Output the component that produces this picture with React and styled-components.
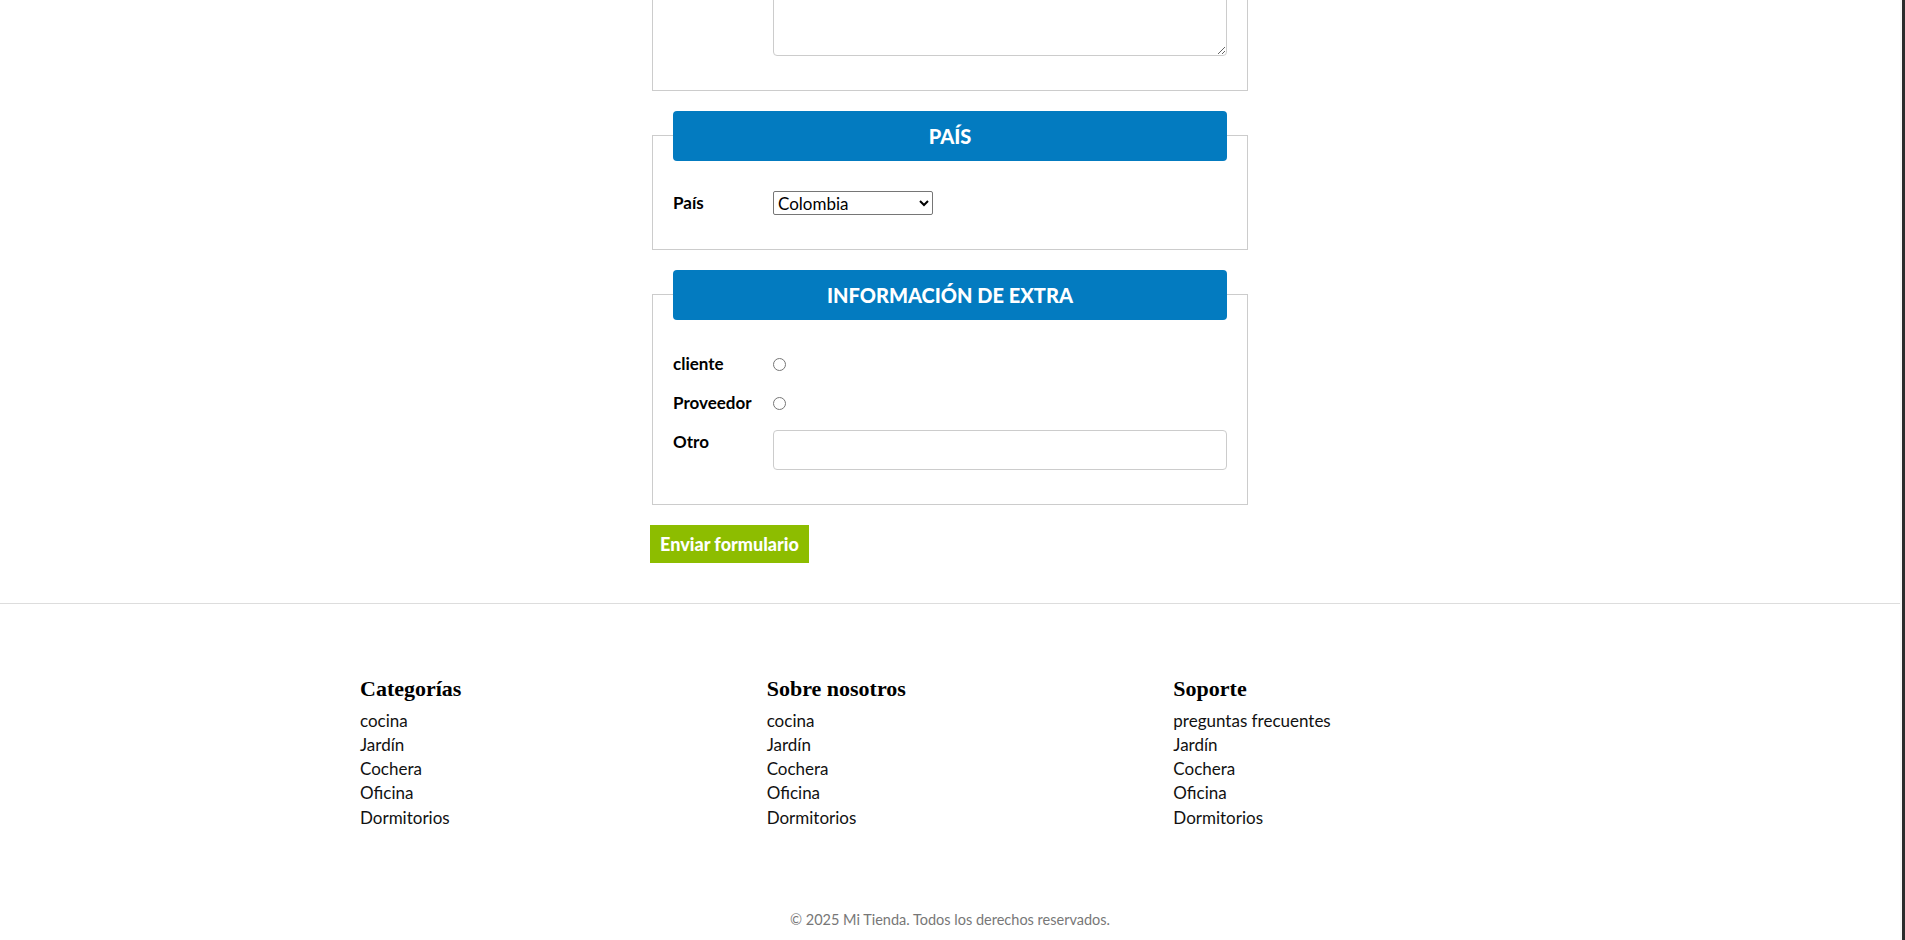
import React from "react";
import styled, { createGlobalStyle } from "styled-components";

const GlobalStyle = createGlobalStyle`
  * { box-sizing: border-box; }
  html, body { margin: 0; padding: 0; background: #ffffff; }
  body {
    font-family: Lato, "Open Sans", "Liberation Sans", sans-serif;
    color: #111;
    overflow: hidden;
  }
`;

const Shell = styled.div`
  display: flex;
  width: 1905px;
  height: 940px;
`;

const Page = styled.div`
  flex: 1;
  height: 940px;
  overflow: hidden;
  display: flex;
  flex-direction: column;
  justify-content: flex-end;
`;

const ScrollTrack = styled.div`
  width: 5px;
  height: 940px;
  display: flex;
  justify-content: flex-end;
  background: #f7f7f7;
`;

const ScrollThumb = styled.div`
  width: 3px;
  height: 100%;
  background: #2b2b2b;
`;

const Main = styled.main`
  flex-shrink: 0;
  padding-bottom: 40px;
`;

const Form = styled.form`
  width: 600px;
  margin: 0 auto;
`;

const Fieldset = styled.fieldset`
  margin: 0 2px 20px;
  padding: 0 20px 34px;
  border: 1px solid #cccccc;
  min-width: 0;
`;

const Legend = styled.legend`
  width: 100%;
  height: 50px;
  padding: 0;
  background: #037bc0;
  color: #ffffff;
  border-radius: 4px;
  font-family: Lato, "Liberation Sans", sans-serif;
  font-weight: 900;
  font-size: 20px;
  line-height: 50px;
  text-transform: uppercase;
  text-align: center;
`;

const Rows = styled.div`
  display: flex;
  flex-direction: column;
  gap: 15px;
  padding-top: ${(p) => p.$top || 30}px;
`;

const Row = styled.div`
  display: grid;
  grid-template-columns: 100px 1fr;
  align-items: start;
  min-height: 24px;
`;

const Label = styled.label`
  font-family: Lato, "Liberation Sans", sans-serif;
  font-weight: 700;
  font-size: 17px;
  line-height: 24px;
  color: #000;
`;

const TextInput = styled.input`
  width: 100%;
  height: ${(p) => (p.$tall ? "40px" : "32px")};
  border: 1px solid #cccccc;
  border-radius: 4px;
  font: inherit;
  padding: 0 8px;
  background: #fff;
`;

const TextArea = styled.textarea`
  width: 100%;
  height: 120px;
  border: 1px solid #cccccc;
  border-radius: 4px;
  font: inherit;
  display: block;
  resize: both;
`;

const Select = styled.select`
  width: 160px;
  height: 24px;
  font-family: Lato, "Liberation Sans", sans-serif;
  font-size: 17px;
  color: #000;
  border: 1px solid #767676;
  border-radius: 2px;
  background: #fff;
`;

const Radio = styled.input.attrs({ type: "radio" })`
  width: 13px;
  height: 13px;
  margin: 6px 0 0 0;
`;

const SubmitButton = styled.button`
  display: block;
  height: 38px;
  padding: 0 10px;
  border: none;
  background: #8dbd00;
  color: #ffffff;
  font-family: Lato, "Liberation Sans", sans-serif;
  font-weight: 900;
  font-size: 18px;
  cursor: pointer;
`;

const Footer = styled.footer`
  flex-shrink: 0;
  border-top: 1px solid #dddddd;
  padding: 73px 0 10px;
`;

const Columns = styled.div`
  width: 1180px;
  margin: 0 auto 80px;
  display: grid;
  grid-template-columns: repeat(3, 1fr);
  column-gap: 40px;
`;

const Column = styled.div`
  display: flex;
  flex-direction: column;
`;

const ColumnTitle = styled.h3`
  margin: 0 0 8px;
  font-family: "Liberation Serif", "DejaVu Serif", serif;
  font-weight: 700;
  font-size: 22px;
  line-height: 24px;
  color: #000;
`;

const LinkList = styled.ul`
  list-style: none;
  margin: 0;
  padding: 0;
`;

const LinkItem = styled.li`
  font-size: 17px;
  line-height: 24.3px;
  color: #111;
`;

const Copyright = styled.p`
  margin: 0;
  text-align: center;
  font-size: 14.5px;
  line-height: 20px;
  color: #777777;
`;

const footerCols = [
  { title: "Categorías", links: ["cocina", "Jardín", "Cochera", "Oficina", "Dormitorios"] },
  { title: "Sobre nosotros", links: ["cocina", "Jardín", "Cochera", "Oficina", "Dormitorios"] },
  { title: "Soporte", links: ["preguntas frecuentes", "Jardín", "Cochera", "Oficina", "Dormitorios"] },
];

export default function App() {
  return (
    <>
      <GlobalStyle />
      <Shell>
        <Page>
          <Main>
            <Form onSubmit={(e) => e.preventDefault()}>
              <Fieldset>
                <Legend>Datos personales</Legend>
                <Rows>
                  <Row>
                    <Label htmlFor="nombre">Nombre</Label>
                    <TextInput id="nombre" type="text" />
                  </Row>
                  <Row>
                    <Label htmlFor="email">Email</Label>
                    <TextInput id="email" type="email" />
                  </Row>
                  <Row>
                    <Label htmlFor="mensaje">Mensaje</Label>
                    <TextArea id="mensaje" />
                  </Row>
                </Rows>
              </Fieldset>

              <Fieldset>
                <Legend>País</Legend>
                <Rows $top={30}>
                  <Row>
                    <Label htmlFor="pais">País</Label>
                    <Select id="pais" defaultValue="Colombia">
                      <option>Colombia</option>
                      <option>México</option>
                      <option>Perú</option>
                      <option>Argentina</option>
                    </Select>
                  </Row>
                </Rows>
              </Fieldset>

              <Fieldset>
                <Legend>Información de extra</Legend>
                <Rows $top={32}>
                  <Row>
                    <Label htmlFor="cliente">cliente</Label>
                    <Radio id="cliente" name="tipo" />
                  </Row>
                  <Row>
                    <Label htmlFor="proveedor">Proveedor</Label>
                    <Radio id="proveedor" name="tipo" />
                  </Row>
                  <Row>
                    <Label htmlFor="otro">Otro</Label>
                    <TextInput id="otro" type="text" $tall />
                  </Row>
                </Rows>
              </Fieldset>

              <SubmitButton type="submit">Enviar formulario</SubmitButton>
            </Form>
          </Main>

          <Footer>
            <Columns>
              {footerCols.map((col) => (
                <Column key={col.title}>
                  <ColumnTitle>{col.title}</ColumnTitle>
                  <LinkList>
                    {col.links.map((l, i) => (
                      <LinkItem key={i}>{l}</LinkItem>
                    ))}
                  </LinkList>
                </Column>
              ))}
            </Columns>
            <Copyright>© 2025 Mi Tienda. Todos los derechos reservados.</Copyright>
          </Footer>
        </Page>
        <ScrollTrack>
          <ScrollThumb />
        </ScrollTrack>
      </Shell>
    </>
  );
}
